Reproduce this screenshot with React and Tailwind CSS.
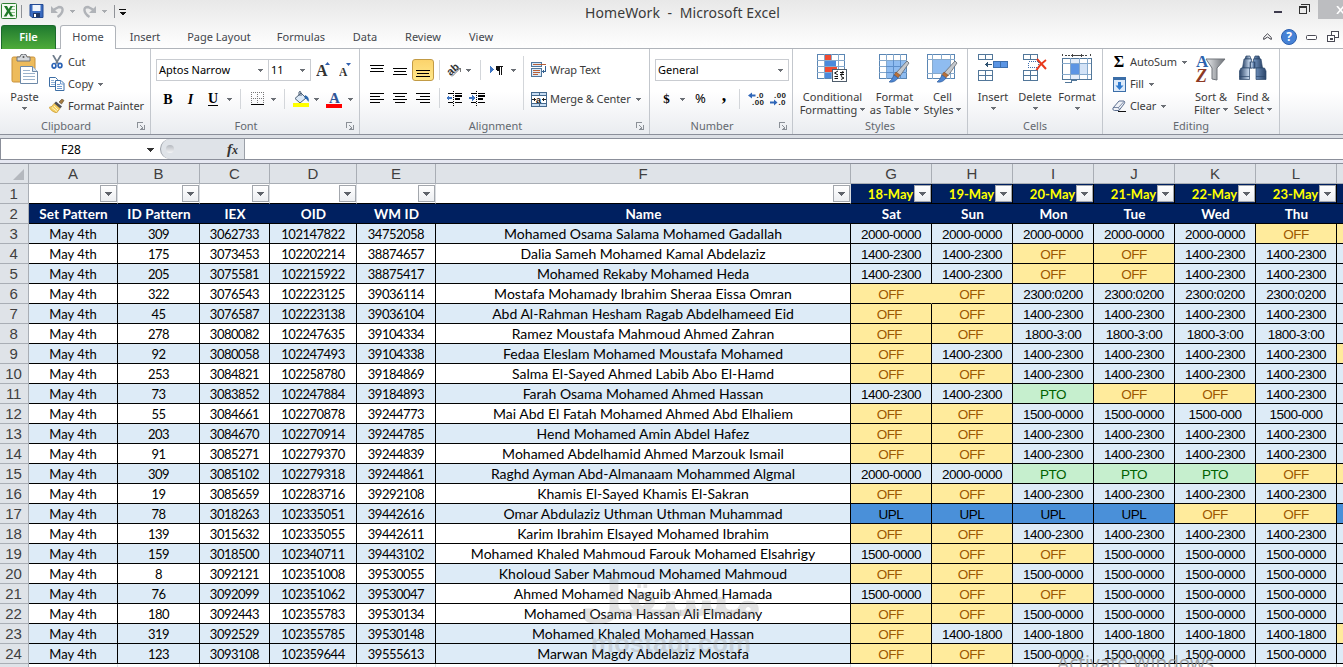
const COLS = [
  { id: "A", w: "w-[89px]", title: "Set Pattern" },
  { id: "B", w: "w-[82px]", title: "ID Pattern" },
  { id: "C", w: "w-[70px]", title: "IEX" },
  { id: "D", w: "w-[87px]", title: "OID" },
  { id: "E", w: "w-[79px]", title: "WM ID" },
  { id: "F", w: "w-[415px]", title: "Name" },
  { id: "G", w: "w-[81px]", title: "Sat", date: "18-May" },
  { id: "H", w: "w-[81px]", title: "Sun", date: "19-May" },
  { id: "I", w: "w-[81px]", title: "Mon", date: "20-May" },
  { id: "J", w: "w-[81px]", title: "Tue", date: "21-May" },
  { id: "K", w: "w-[81px]", title: "Wed", date: "22-May" },
  { id: "L", w: "w-[81px]", title: "Thu", date: "23-May" },
];

const a = "1400-2300";
const b = "1500-0000";
const c = "2000-0000";
const d = "2300:0200";
const e = "1800-3:00";
const f = "1400-1800";
const O = "OFF";
// typed with a trailing space in the sheet, so it sits a little to the left
const o = "OFF ";

// id pattern, iex, oid, wm id, name, days, left fill, name fill, next column
const ROWS = [
  ["309", "3062733", "102147822", "34752058", "Mohamed Osama Salama Mohamed Gadallah", [c, c, c, c, c, O], 1, 1, O],
  ["175", "3073453", "102202214", "38874657", "Dalia Sameh Mohamed Kamal Abdelaziz", [a, a, O, O, a, a], 0, 0],
  ["205", "3075581", "102215922", "38875417", "Mohamed Rekaby Mohamed Heda", [a, a, O, O, a, a], 1, 1],
  ["322", "3076543", "102223125", "39036114", "Mostafa Mohamady Ibrahim Sheraa Eissa Omran", [O, O, d, d, d, d], 0, 0],
  ["45", "3076587", "102223138", "39036104", "Abd Al-Rahman Hesham Ragab Abdelhameed Eid", [o, O, a, a, a, a], 1, 1],
  ["278", "3080082", "102247635", "39104334", "Ramez Moustafa Mahmoud Ahmed Zahran", [o, o, e, e, e, e], 0, 0],
  ["92", "3080058", "102247493", "39104338", "Fedaa Eleslam Mohamed Moustafa Mohamed", [O, a, a, a, a, a], 1, 1, O],
  ["253", "3084821", "102258780", "39184869", "Salma El-Sayed Ahmed Labib Abo El-Hamd", [O, O, a, a, a, a], 0, 0],
  ["73", "3083852", "102247884", "39184893", "Farah Osama Mohamed Ahmed Hassan", [a, a, "PTO", O, O, a], 1, 1],
  ["55", "3084661", "102270878", "39244773", "Mai Abd El Fatah Mohamed Ahmed Abd Elhaliem", [o, o, b, b, "1500-000", "1500-000"], 0, 0],
  ["203", "3084670", "102270914", "39244785", "Hend Mohamed Amin Abdel Hafez", [o, o, a, a, a, a], 1, 1],
  ["91", "3085271", "102279370", "39244839", "Mohamed Abdelhamid Ahmed Marzouk Ismail", [O, O, a, a, a, a], 0, 0],
  ["309", "3085102", "102279318", "39244861", "Raghd Ayman Abd-Almanaam Mohammed Algmal", [c, c, "PTO", "PTO", "PTO", O], 1, 1, O],
  ["19", "3085659", "102283716", "39292108", "Khamis El-Sayed Khamis El-Sakran", [o, O, a, a, a, a], 0, 0],
  ["78", "3018263", "102335051", "39442616", "Omar Abdulaziz Uthman Uthman Muhammad", ["UPL", "UPL", "UPL", "UPL", O, O], 1, 1, "UPL"],
  ["139", "3015632", "102335055", "39442611", "Karim Ibrahim Elsayed Mohamed Ibrahim", [o, o, a, a, a, a], 0, 0],
  ["159", "3018500", "102340711", "39443102", "Mohamed Khaled Mahmoud Farouk Mohamed Elsahrigy", [b, O, O, b, b, b], 1, 0],
  ["8", "3092121", "102351008", "39530055", "Kholoud Saber Mahmoud Mohamed Mahmoud", [o, o, b, b, b, b], 0, 1],
  ["76", "3092099", "102351062", "39530047", "Ahmed Mohamed Naguib Ahmed Hamada", [b, O, O, b, b, b], 1, 0],
  ["180", "3092443", "102355783", "39530134", "Mohamed Osama Hassan Ali Elmadany", [O, O, b, b, b, b], 0, 0],
  ["319", "3092529", "102355785", "39530148", "Mohamed Khaled Mohamed Hassan", [O, f, f, f, f, f], 1, 1, O],
  ["123", "3093108", "102359644", "39555613", "Marwan Magdy Abdelaziz Mostafa", [O, O, b, b, b, b], 1, 1],
];

const dayStyle = (value = "") => {
  if (value.startsWith("OFF")) return "bg-[#ffeb9c] text-[#9c5700]";
  if (value === "PTO") return "bg-[#c6efce] text-[#006100]";
  if (value === "UPL") return "bg-[#4a90d9] text-black";
  return "bg-[#ddebf7] text-black";
};

const Caret = ({ className = "text-[#6b6f75]" }) => (
  <svg width="5" height="3" viewBox="0 0 5 3" className={`shrink-0 ${className}`} shapeRendering="crispEdges">
    <path d="M0 0h5v1H4v1H3v1H2V2H1V1H0z" fill="currentColor" />
  </svg>
);

const Slot = ({ w, children }) => (
  <div className={`flex shrink-0 items-center justify-center ${w}`}>{children}</div>
);

const Sep = ({ w }) => (
  <Slot w={w}>
    <div className="h-[20px] w-px bg-[#d3d6da]" />
  </Slot>
);

const Launcher = () => (
  <svg width="8" height="8" viewBox="0 0 8 8" className="mr-[5px] shrink-0" shapeRendering="crispEdges">
    <path d="M.5 6V.5H6M3 3l3 3M7.5 3v4.500H3" fill="none" stroke="#8b9097" />
    <path d="M6 4v3H3z" fill="#8b9097" />
  </svg>
);

const Group = ({ w, label, launcher, children }) => (
  <section className={`flex h-[85px] shrink-0 flex-col border-r border-[#c3c7cd] ${w}`}>
    <div className="flex h-[69px]">{children}</div>
    <div className="flex h-[16px] items-center">
      <span className={`flex-1 text-center leading-4 text-[#63686f] ${launcher ? "pr-[5px]" : ""}`}>{label}</span>
      {launcher && <Launcher />}
    </div>
  </section>
);

const BigButton = ({ w, icon, lines, caretBelow }) => (
  <div className={`flex shrink-0 flex-col items-center pt-[5px] ${w}`}>
    <div className="flex h-[31px] items-start justify-center">{icon}</div>
    <span className="mt-[5px] whitespace-nowrap leading-[13px]">{lines[0]}</span>
    {lines[1] ? (
      <span className="flex items-center gap-[3px] whitespace-nowrap leading-[13px]">
        {lines[1]}
        <Caret />
      </span>
    ) : (
      caretBelow && <Caret className="mt-[4px] text-[#6b6f75]" />
    )}
  </div>
);

const SmallButton = ({ icon, label, caret }) => (
  <div className="flex h-[22px] items-center gap-[3px] whitespace-nowrap">
    <span className="flex w-[16px] justify-center">{icon}</span>
    <span className="leading-4 tracking-[-0.1px]">{label}</span>
    {caret && <Caret className="ml-[2px] text-[#6b6f75]" />}
  </div>
);

const PasteIcon = () => (
  <svg width="28" height="31" viewBox="0 0 28 31">
    <rect x="1" y="3" width="23" height="25" rx="1.500" fill="#edbb5c" stroke="#c8913a" />
    <path d="M6 7V3h3q0-3 3.500-3T16 3h3v4z" fill="#d7dade" stroke="#6f7378" />
    <circle cx="12.500" cy="3" r="1" fill="#555" />
    <path d="M9.500 12.500h12l5 5v12h-17z" fill="#fff" stroke="#6d89a8" />
    <path d="M21.500 12.500v5h5" fill="#dbe7f3" stroke="#6d89a8" />
    <path d="M12 16.500h7M12 19.500h12M12 22.500h12M12 25.500h12" stroke="#9bb2cb" />
  </svg>
);

const CutIcon = () => (
  <svg width="12" height="14" viewBox="0 0 12 14">
    <path d="M2 0l5 8.500M10 0L5 8.500" stroke="#6f7d8c" strokeWidth="1.700" fill="none" />
    <ellipse cx="3" cy="10.800" rx="1.900" ry="2.300" fill="none" stroke="#2b63b5" strokeWidth="1.700" />
    <ellipse cx="9" cy="10.500" rx="1.900" ry="2.200" fill="none" stroke="#2b63b5" strokeWidth="1.700" />
  </svg>
);

const CopyIcon = () => (
  <svg width="16" height="14" viewBox="0 0 16 14">
    <path d="M.5.500h6l2 2V9.500h-8z" fill="#fff" stroke="#3d6ea5" />
    <path d="M2 3.500h3M2 5.500h4M2 7.500h4" stroke="#8db0d8" />
    <path d="M6.500 3.500h5.500l3 3v7H6.500z" fill="#fff" stroke="#3d6ea5" />
    <path d="M11.500 3.500v3.500H15M8 7.500h3M8 9.500h5M8 11.500h5" stroke="#6f9bd0" fill="none" />
  </svg>
);

const PainterIcon = () => (
  <svg width="16" height="14" viewBox="0 0 16 14">
    <path d="M10 3l3-3 2 1.500L12.500 5z" fill="#a67c42" stroke="#5d4a2c" strokeWidth=".6" />
    <path d="M7 2.500l6 5-2 2-6-5z" fill="#4d4f56" />
    <path d="M5 4.500l6 5-3.500 4.500Q3 13 0 8.500 3.500 8 5 4.500z" fill="#f3cf63" stroke="#c9962d" strokeWidth=".7" />
    <path d="M3 8.500l5 4M5 7l4 4" stroke="#fff3c4" />
  </svg>
);

const GrowA = ({ small }) => (
  <svg width="14" height="16" viewBox="0 0 14 16">
    <text x="0" y="14" fontSize={small ? 11.500 : 16} fontWeight="bold" fontFamily="Liberation Serif, serif" fill="#333">A</text>
    <path d={small ? "M7 1h5l-2.500 3z" : "M9 3h5l-2.500-3z"} fill="#2f5fae" />
  </svg>
);

const BordersIcon = () => (
  <svg width="13" height="14" viewBox="0 0 13 14" shapeRendering="crispEdges">
    <path d="M.5 0v12M6.500 0v12M12.500 0v12M0 .5h13M0 6.500h13" stroke="#777" strokeDasharray="1 1" fill="none" />
    <path d="M0 12.500h13" stroke="#000" />
  </svg>
);

const FillIcon = () => (
  <svg width="17" height="16" viewBox="0 0 17 16">
    <path d="M2 7.500L8 2l5 5-6 5z" fill="#dce9f6" stroke="#4b5f76" />
    <path d="M6 5V1q1.500-2 2 1v3" fill="none" stroke="#4b5f76" />
    <path d="M12 4q5 2 3.500 7-1.500-3-4-4z" fill="#2b68ae" />
    <rect x="0" y="12" width="16" height="4" fill="#ff0" />
  </svg>
);

const FontColorIcon = () => (
  <svg width="17" height="17" viewBox="0 0 17 17">
    <text x="3" y="12" fontSize="15" fontWeight="bold" fontFamily="Liberation Serif, serif" fill="#2f5597">A</text>
    <rect x="0" y="13" width="16" height="4" fill="#f00" />
  </svg>
);

const Lines = ({ d }) => (
  <svg width="14" height="13" viewBox="0 0 14 13" shapeRendering="crispEdges">
    <path d={d} stroke="#000" />
  </svg>
);

const OrientationIcon = () => (
  <svg width="18" height="18" viewBox="0 0 18 18" className="overflow-visible">
    <text x="1" y="12" fontSize="11" fontWeight="bold" fontFamily="Liberation Sans, sans-serif" fill="#333" transform="rotate(-42 7 9)">ab</text>
    <path d="M6 15.500l8-8M14.500 7v4M14.500 7.500h-4" stroke="#777" fill="none" />
  </svg>
);

const DirectionIcon = () => (
  <svg width="14" height="11" viewBox="0 0 14 11" shapeRendering="crispEdges">
    <path d="M0 1v7l4-3.500z" fill="#3f76c4" />
    <path d="M6 1h7v1h-1v8h-1V2h-1v8H9V6H7L6 5V1z" fill="#111" />
  </svg>
);

const IndentIcon = ({ right }) => (
  <svg width="17" height="15" viewBox="0 0 17 15" shapeRendering="crispEdges">
    <path d="M2 2.500h5M9 2.500h7M9 4.500h7M9 5.500h7M9 8.500h5M9 7.500h5M2 11.500h5M9 11.500h7" stroke="#000" />
    <path d="M7.500 0v15" stroke="#000" strokeDasharray="1 1" />
    <path d={right ? "M0 6h3V4l3 3-3 3V8H0z" : "M6 6H3V4L0 7l3 3V8h3z"} fill="#3f76c4" />
  </svg>
);

const WrapIcon = () => (
  <svg width="17" height="16" viewBox="0 0 17 16" shapeRendering="crispEdges">
    <rect x=".5" y=".5" width="11" height="4" fill="#dbe9f7" stroke="#466f96" />
    <path d="M2 2.500h14" stroke="#b5562b" />
    <rect x=".5" y="6.500" width="11" height="8" fill="#dbe9f7" stroke="#466f96" />
    <path d="M2 8.500h8M2 10.500h8M2 12.500h5" stroke="#b5562b" />
    <path d="M15 4v5h-1V7l-2 2.500L14 12v-2h2V4z" fill="#32608f" />
  </svg>
);

const MergeIcon = () => (
  <svg width="16" height="15" viewBox="0 0 16 15" shapeRendering="crispEdges">
    <rect x=".5" y=".5" width="15" height="14" fill="#c6dcf2" stroke="#43688d" />
    <path d="M8 0v4M8 11v4M0 3.500h16M0 11.500h16" stroke="#43688d" />
    <rect x="1" y="4" width="14" height="7" fill="#fff" />
    <path d="M1 7.500h4M11 7.500h4M3.500 6v3M12.500 6v3" stroke="#222" />
    <text x="5" y="10.500" fontSize="9" fontWeight="bold" fontFamily="Liberation Sans, sans-serif" fill="#111">a</text>
  </svg>
);

const DecimalIcon = ({ less }) => (
  <svg width="17" height="14" viewBox="0 0 17 14">
    <g fontSize="8" fontWeight="bold" fontFamily="Liberation Sans, sans-serif" fill="#222">
      <text x={less ? 4 : 8.500} y="6" textLength={less ? 12 : 7}>{less ? ".00" : ".0"}</text>
      <text x={less ? 8.500 : 4} y="13" textLength={less ? 7 : 12}>{less ? ".0" : ".00"}</text>
    </g>
    <path d={less ? "M0 9.500h4V7.500l3.500 3L4 13.500v-2H0z" : "M7.500 2.500H4V.5L0 3.500l4 3v-2h3.500z"} fill="#2f66b8" />
  </svg>
);

const Grid = () => (
  <>
    <rect x=".5" y=".5" width="27" height="24" fill="#fff" stroke="#5a86b4" />
    <path d="M7.500 0v25M14.500 0v25M21.500 0v25M0 6.500h28M0 12.500h28M0 18.500h28" stroke="#86a9cc" />
  </>
);

const Brush = () => (
  <g>
    <path d="M28 7l2 2-9 13-4-3z" fill="#c4c8cd" stroke="#62676e" strokeWidth=".8" />
    <path d="M17 18l4 3-2 3-4-3z" fill="#b8703a" stroke="#7c4925" strokeWidth=".5" />
    <path d="M15 21l4 3q-3 5-9 4 3-2 5-7z" fill="#4e86d2" stroke="#2c5793" strokeWidth=".6" />
  </g>
);

const CondFormatIcon = () => (
  <svg width="31" height="29" viewBox="0 0 31 29">
    <g shapeRendering="crispEdges">
      <Grid />
      <rect x="8" y="1" width="6" height="5" fill="#ef4b32" />
      <rect x="8" y="7" width="11" height="5" fill="#4b8add" />
      <rect x="8" y="13" width="12" height="5" fill="#ef4b32" />
      <rect x="8" y="19" width="6" height="5" fill="#4b8add" />
      <rect x="15.500" y="15.500" width="14" height="12" fill="#fff" stroke="#4f5d6b" />
    </g>
    <path d="M21 17l-3.500 2 3.500 2M17.500 22.500H21M17.500 24.500H21M23 18.500h4M23 20.500h4M24 22.500l3 1.500-3 1.500M26 17l-2 5" stroke="#111" fill="none" />
  </svg>
);

const TableFormatIcon = () => (
  <svg width="31" height="29" viewBox="0 0 31 29">
    <g shapeRendering="crispEdges">
      <Grid />
      <rect x="8" y="7" width="19" height="17" fill="#8fbcf0" />
      <path d="M14.500 6v19M21.500 6v19M7 12.500h20M7 18.500h20" stroke="#5d8fcb" />
    </g>
    <Brush />
  </svg>
);

const CellStylesIcon = () => (
  <svg width="31" height="29" viewBox="0 0 31 29">
    <g shapeRendering="crispEdges">
      <rect x=".5" y=".5" width="27" height="24" fill="#fff" stroke="#5a86b4" />
      <path d="M5.500 0v25M23.500 0v25M14.500 0v5M0 5.500h28M0 19.500h28M14.500 20v5" stroke="#86a9cc" />
      <rect x="6" y="6" width="17" height="13" fill="#8fbcf0" />
    </g>
    <Brush />
  </svg>
);

const InsertIcon = () => (
  <svg width="31" height="28" viewBox="0 0 31 28" shapeRendering="crispEdges">
    <path d="M.5.500h14v5H.5zM7.500.500v5M.5 16.500h14v10H.5zM7.500 16v10M0 21.500h14" fill="#fff" stroke="#52779a" />
    <rect x="15.500" y="7.500" width="14" height="6" fill="#5b95e4" stroke="#3e6fae" />
    <path d="M22.500 8v5" stroke="#3e6fae" />
    <path d="M14 10.500H8M9.500 8v5M8.500 9v3M7.500 10v1" stroke="#2d5170" />
  </svg>
);

const DeleteIcon = () => (
  <svg width="25" height="28" viewBox="0 0 25 28">
    <g shapeRendering="crispEdges">
      <path d="M.5.500h14v5H.5zM7.500.500v5M.5 16.500h14v10H.5zM7.500 16v10M0 21.500h14" fill="#fff" stroke="#52779a" />
      <path d="M5.500 7.500h10v6h-10z" fill="none" stroke="#3e6fae" strokeDasharray="1 1" />
    </g>
    <path d="M14 5l9 10M23 6q-6 4-9.500 10" stroke="#e8391c" strokeWidth="2" fill="none" />
  </svg>
);

const FormatIcon = () => (
  <svg width="31" height="30" viewBox="0 0 31 30" shapeRendering="crispEdges">
    <path d="M.5 0v3M28.500 0v3M3 1.500h6M20 1.500h6" stroke="#444" strokeDasharray="2 1" />
    <path d="M9 1.500h11M10.500 0v3M19.500 0v3" stroke="#444" />
    <rect x=".5" y="4.500" width="29" height="21" fill="#fff" stroke="#52779a" />
    <rect x="9" y="5" width="8" height="20" fill="#e3edf9" />
    <path d="M8.500 4v21M17.500 4v21M25.500 4v21M0 9.500h29M0 20.500h29" stroke="#86a9cc" />
    <rect x="9" y="10" width="8" height="10" fill="#5b95e4" />
    <rect x="18" y="10" width="7" height="10" fill="#d3e3f7" />
    <path d="M3 28.500h6l1-2h5" fill="none" stroke="#52779a" />
  </svg>
);

const FillDownIcon = () => (
  <svg width="13" height="15" viewBox="0 0 13 15">
    <rect x=".5" y=".5" width="12" height="14" fill="#dceafa" stroke="#3b6ea8" />
    <path d="M1 2h11" stroke="#3b6ea8" strokeWidth="2" />
    <path d="M5 5h3v3.500h2.500L6.500 13l-4-4.500H5z" fill="#2f7bd0" />
  </svg>
);

const ClearIcon = () => (
  <svg width="14" height="12" viewBox="0 0 14 12">
    <path d="M1 8l6-7h5q1.500 1 0 3L7 10.500H2.500Q0 10 1 8z" fill="#eef1f6" stroke="#5c6f90" />
    <path d="M1.500 7.500h5l1 2.500M6.500 7.500L12 1.500" stroke="#5c6f90" fill="none" strokeWidth=".8" />
    <path d="M6 11.500h8" stroke="#111" />
  </svg>
);

const SortIcon = () => (
  <svg width="30" height="31" viewBox="0 0 30 31" className="overflow-visible">
    <defs>
      <linearGradient id="funnel" x1="0" x2="1">
        <stop offset="0" stopColor="#e9ebed" />
        <stop offset="1" stopColor="#6b6f75" />
      </linearGradient>
    </defs>
    <path d="M10 5h19l-8 9v12l-5-1V14z" fill="url(#funnel)" stroke="#70757b" />
    <text x="0" y="13" fontSize="17" fontWeight="bold" fontFamily="Liberation Serif, serif" fill="#2b62ad">A</text>
    <text x="0" y="28" fontSize="18" fontWeight="bold" fontStyle="italic" fontFamily="Liberation Serif, serif" fill="#8d3a25">Z</text>
  </svg>
);

const FindIcon = () => (
  <svg width="28" height="29" viewBox="0 0 28 29">
    <defs>
      <linearGradient id="barrel" x1="0" x2="1">
        <stop offset="0" stopColor="#2b4468" />
        <stop offset=".35" stopColor="#c4d6ec" />
        <stop offset=".6" stopColor="#6f90bb" />
        <stop offset="1" stopColor="#2b4468" />
      </linearGradient>
    </defs>
    <g fill="url(#barrel)" stroke="#2d476c" strokeWidth=".7">
      <path d="M7 2h4l1 3H6zM16 2h4l1 3h-6z" />
      <path d="M5 5h7.500l.5 9H3.500zM14.500 5H22l1.500 9H14z" />
      <rect x="11" y="8" width="5" height="6" />
      <path d="M2 14h8.500v11.500H.5V17zM17 14h8.500l1.500 3v8.500H17z" />
    </g>
    <path d="M.5 22.500h10M17 22.500h10" stroke="#2d476c" strokeWidth=".7" />
  </svg>
);

const ExcelIcon = () => (
  <svg width="17" height="17" viewBox="0 0 17 17">
    <rect x=".5" y=".5" width="15" height="15" rx="1" fill="#f4faf2" stroke="#2e7d32" />
    <path d="M10 3.500h4M10 6.500h4M10 9.500h4M10 12.500h4" stroke="#8cbf8c" />
    <path d="M3 3h3l1.700 3L9.500 3H12L9 8l3.500 5.500h-3L7.500 10l-2 3.500H2.700L6 8z" fill="#1f7a28" />
  </svg>
);

const SaveIcon = () => (
  <svg width="15" height="14" viewBox="0 0 15 14">
    <path d="M1 .5h13v13H3l-2-2z" fill="#3a6bc0" stroke="#234a93" />
    <rect x="3.500" y="1" width="8" height="6" fill="#f0f5fc" />
    <rect x="4" y="9" width="7" height="4.500" fill="#1d3768" />
    <rect x="5" y="10" width="2" height="3" fill="#fff" />
  </svg>
);

const UndoIcon = ({ flip }) => (
  <svg width="13" height="13" viewBox="0 0 13 13" className={flip ? "-scale-x-100" : ""}>
    <path d="M3 4.500l5-2.500q4 0 3.500 3.500T6.500 12" fill="none" stroke="#b0b3b8" strokeWidth="2.400" />
    <path d="M0 1v7h7z" fill="#b0b3b8" />
  </svg>
);

const TitleBar = () => (
  <header className="flex h-[25px] items-start">
    <div className="flex h-[22px] w-[300px] items-center pl-px">
      <ExcelIcon />
      <div className="ml-[3px] h-[13px] w-px bg-[#8f9297]" />
      <div className="ml-[7px]"><SaveIcon /></div>
      <div className="ml-[7px]"><UndoIcon /></div>
      <Caret className="ml-[6px] text-[#a9acb0]" />
      <div className="ml-[8px]"><UndoIcon flip /></div>
      <Caret className="ml-[6px] text-[#a9acb0]" />
      <div className="ml-[7px] h-[13px] w-px bg-[#8f9297]" />
      <svg width="7" height="7" viewBox="0 0 7 7" className="ml-[4px] mt-[3px]" shapeRendering="crispEdges">
        <path d="M0 .5h7" stroke="#111" />
        <path d="M0 3h7L3.500 6.500z" fill="#111" />
      </svg>
    </div>
    <h1 className="flex-1 whitespace-pre pl-[22px] text-center text-[14px] leading-[26px] tracking-[0.1px] text-[#3a3a3a]">
      HomeWork{"  -  "}Microsoft Excel
    </h1>
    <div className="flex w-[300px] justify-end">
      <svg width="40" height="19" viewBox="0 0 40 19" shapeRendering="crispEdges" className="mr-[5px]">
        <path d="M1 11h8v2H1z" fill="#3d3a4c" />
        <path d="M26.500 6.500h7v7h-7zM28 4.500h8.500V12" fill="none" stroke="#333" />
        <path d="M26 6h8v2h-8z" fill="#333" />
      </svg>
      <div className="flex h-[19px] w-[25px] items-center bg-[#bcbdc0] pl-[18px]">
        <svg width="7" height="8" viewBox="0 0 7 8">
          <path d="M1 0l7 8M8 0L1 8" stroke="#fff" strokeWidth="1.600" />
        </svg>
      </div>
    </div>
  </header>
);

const TABS = [
  ["Insert", "w-[58px]"],
  ["Page Layout", "w-[90px]"],
  ["Formulas", "w-[74px]"],
  ["Data", "w-[54px]"],
  ["Review", "w-[62px]"],
  ["View", "w-[54px]"],
];

const TabBar = () => (
  <nav className="flex h-[24px] text-[#44474d]">
    <div className="ml-px flex w-[55px] items-center justify-center rounded-t-[3px] border border-b-0 border-[#1b6a2b] bg-linear-to-b from-[#1f7a2f] to-[#4dab3a] font-semibold text-white">
      File
    </div>
    <div className="w-[4px] border-b border-[#b0b4ba]" />
    <div className="flex w-[56px] items-center justify-center rounded-t-[3px] border border-b-0 border-[#b0b4ba] bg-white">Home</div>
    {TABS.map(([label, w]) => (
      <div key={label} className={`flex items-center justify-center border-b border-[#b0b4ba] pt-px ${w}`}>{label}</div>
    ))}
    <div className="flex flex-1 items-center justify-end border-b border-[#b0b4ba] pr-[3px]">
      <svg width="9" height="7" viewBox="0 0 9 7">
        <path d="M.7 4.500L4.500.8l3.800 3.700v2L4.500 4 .7 6.500z" fill="#fff" stroke="#3d3d46" />
      </svg>
      <div className="ml-[9px] flex h-[16px] w-[16px] items-center justify-center rounded-full border border-[#2b5fae] bg-[#4682d6] text-[12px] font-bold text-white">?</div>
      <svg width="12" height="6" viewBox="0 0 12 6" className="ml-[9px] mt-[2px]">
        <rect x=".5" y=".5" width="10" height="4" rx="1" fill="#fff" stroke="#4a4a55" />
      </svg>
      <svg width="13" height="12" viewBox="0 0 13 12" className="ml-[9px]" shapeRendering="crispEdges">
        <rect x="4.500" y=".5" width="7" height="6" fill="#fff" stroke="#4a4a55" />
        <rect x=".5" y="4.500" width="7" height="6" fill="#fff" stroke="#4a4a55" />
        <rect x="3" y="7" width="3" height="2" fill="#4a4a55" />
      </svg>
    </div>
  </nav>
);

const Select = ({ w, value }) => (
  <div className={`flex h-[22px] items-center justify-between border border-[#c9ccd1] bg-white pl-[2px] pr-[5px] text-black ${w}`}>
    <span className="leading-4">{value}</span>
    <Caret />
  </div>
);

const Ribbon = () => (
  <div className="flex h-[85px] bg-linear-to-b from-white from-50% to-[#eaecf0] text-[#3b3b3b]">
    <Group w="w-[151px]" label="Clipboard" launcher>
      <BigButton w="w-[49px]" icon={<PasteIcon />} lines={["Paste"]} caretBelow />
      <div className="flex flex-col pt-[2px]">
        <SmallButton icon={<CutIcon />} label="Cut" />
        <SmallButton icon={<CopyIcon />} label="Copy" caret />
        <SmallButton icon={<PainterIcon />} label="Format Painter" />
      </div>
    </Group>

    <Group w="w-[209px]" label="Font" launcher>
      <div className="flex flex-col pl-[5px] pt-[10px]">
        <div className="flex h-[22px] items-center">
          <Select w="w-[113px]" value="Aptos Narrow" />
          <Select w="-ml-px w-[43px]" value="11" />
          <Slot w="ml-[4px] w-[16px]"><GrowA /></Slot>
          <Slot w="ml-[8px] w-[14px]"><GrowA small /></Slot>
        </div>
        <div className="mt-[6px] flex h-[24px] items-center font-['Liberation_Serif',serif] text-[14px] text-black">
          <Slot w="w-[24px]"><b>B</b></Slot>
          <Slot w="w-[21px]"><i className="font-semibold">I</i></Slot>
          <Slot w="w-[24px]"><b className="border-b border-black leading-[13px]">U</b></Slot>
          <Slot w="w-[8px]"><Caret /></Slot>
          <Sep w="w-[14px]" />
          <Slot w="w-[21px]"><BordersIcon /></Slot>
          <Slot w="w-[10px]"><Caret /></Slot>
          <Sep w="w-[12px]" />
          <Slot w="w-[22px]"><FillIcon /></Slot>
          <Slot w="w-[8px]"><Caret /></Slot>
          <Slot w="w-[28px]"><FontColorIcon /></Slot>
          <Slot w="w-[4px]"><Caret /></Slot>
        </div>
      </div>
    </Group>

    <Group w="w-[290px]" label="Alignment" launcher>
      <div className="flex w-[163px] flex-col pl-[5px] pt-[10px]">
        <div className="flex h-[22px] items-center">
          <Slot w="w-[24px]"><Lines d="M0 1.500h14M1 4.500h12M0 7.500h14" /></Slot>
          <Slot w="w-[22px]"><Lines d="M0 4.500h14M1 7.500h12M0 10.500h14" /></Slot>
          <Slot w="w-[24px]">
            <div className="flex h-[22px] w-[22px] items-center justify-center rounded-[3px] border border-[#c29b45] bg-linear-to-b from-[#fbd36c] to-[#ffe88a]">
              <Lines d="M0 6.500h14M1 9.500h12M0 12.500h14" />
            </div>
          </Slot>
          <Sep w="w-[8px]" />
          <Slot w="w-[23px]"><OrientationIcon /></Slot>
          <Slot w="w-[5px]"><Caret /></Slot>
          <Sep w="w-[18px]" />
          <Slot w="w-[16px]"><DirectionIcon /></Slot>
          <Slot w="w-[16px]"><Caret /></Slot>
        </div>
        <div className="mt-[6px] flex h-[22px] items-center">
          <Slot w="w-[24px]"><Lines d="M0 1.500h14M0 4.500h10M0 7.500h14M0 10.500h10" /></Slot>
          <Slot w="w-[22px]"><Lines d="M0 1.500h14M2 4.500h10M0 7.500h14M2 10.500h10" /></Slot>
          <Slot w="w-[24px]"><Lines d="M0 1.500h14M4 4.500h10M0 7.500h14M4 10.500h10" /></Slot>
          <Sep w="w-[8px]" />
          <Slot w="w-[23px]"><IndentIcon /></Slot>
          <Slot w="w-[23px]"><IndentIcon right /></Slot>
        </div>
      </div>
      <div className="mt-[7px] h-[54px] w-px bg-[#d3d6da]" />
      <div className="flex flex-col pl-[7px] pt-[10px]">
        <SmallButton icon={<WrapIcon />} label="Wrap Text" />
        <div className="h-[7px]" />
        <SmallButton icon={<MergeIcon />} label="Merge & Center" caret />
      </div>
    </Group>

    <Group w="w-[143px]" label="Number" launcher>
      <div className="flex flex-col pl-[5px] pt-[10px]">
        <Select w="w-[134px]" value="General" />
        <div className="mt-[7px] flex h-[22px] items-center text-black">
          <Slot w="w-[23px]"><b className="font-['Liberation_Serif',serif] text-[13px]">$</b></Slot>
          <Slot w="w-[8px]"><Caret /></Slot>
          <Slot w="w-[29px]"><span className="text-[13px]">%</span></Slot>
          <Slot w="w-[18px]"><b className="-mt-[8px] font-['Liberation_Serif',serif] text-[18px]">,</b></Slot>
          <Sep w="w-[12px]" />
          <Slot w="w-[22px]"><DecimalIcon /></Slot>
          <Slot w="w-[22px]"><DecimalIcon less /></Slot>
        </div>
      </div>
    </Group>

    <Group w="w-[175px]" label="Styles">
      <div className="flex pl-[4px]">
        <BigButton w="w-[71px]" icon={<CondFormatIcon />} lines={["Conditional", "Formatting"]} />
        <BigButton w="w-[53px]" icon={<TableFormatIcon />} lines={["Format", "as Table"]} />
        <BigButton w="w-[43px]" icon={<CellStylesIcon />} lines={["Cell", "Styles"]} />
      </div>
    </Group>

    <Group w="w-[135px]" label="Cells">
      <div className="flex pl-[4px]">
        <BigButton w="w-[42px]" icon={<InsertIcon />} lines={["Insert"]} caretBelow />
        <BigButton w="w-[42px]" icon={<DeleteIcon />} lines={["Delete"]} caretBelow />
        <BigButton w="w-[42px]" icon={<FormatIcon />} lines={["Format"]} caretBelow />
      </div>
    </Group>

    <Group w="w-[177px]" label="Editing">
      <div className="flex w-[87px] flex-col pl-[8px] pt-[2px]">
        <SmallButton icon={<b className="font-['Liberation_Serif',serif] text-[16px] leading-4 text-black">Σ</b>} label="AutoSum" caret />
        <SmallButton icon={<FillDownIcon />} label="Fill" caret />
        <SmallButton icon={<ClearIcon />} label="Clear" caret />
      </div>
      <BigButton w="w-[42px]" icon={<SortIcon />} lines={["Sort &", "Filter"]} />
      <BigButton w="w-[42px]" icon={<FindIcon />} lines={["Find &", "Select"]} />
    </Group>
  </div>
);

const FormulaBar = () => (
  <div className="flex h-[21px] border-b border-[#8b8f9a] bg-white">
    <div className="flex w-[160px] items-center border-l border-[#8b8f9a]">
      <span className="w-[140px] pt-px text-center text-[12px] leading-4 text-black">F28</span>
      <svg width="7" height="4" viewBox="0 0 7 4" className="ml-[6px] mt-[2px]" shapeRendering="crispEdges">
        <path d="M0 0h7L3.500 4z" fill="#333" />
      </svg>
    </div>
    <div className="flex w-[85px] items-center rounded-l-full border-l border-r border-[#9ba0a8] bg-[#dfe3e8]">
      <div className="ml-[5px] h-[8px] w-[8px] rounded-full bg-linear-to-b from-[#b5b9bf] to-[#f4f5f7]" />
      <i className="ml-auto mr-[6px] font-['Liberation_Serif',serif] text-[15px] font-bold leading-4 text-[#333]">
        f<span className="text-[12px]">x</span>
      </i>
    </div>
  </div>
);

const FilterButton = () => (
  <div className="absolute right-0 top-px flex h-[17px] w-[17px] items-center justify-center border border-[#a3a7ad] bg-linear-to-b from-white to-[#eceef1]">
    <svg width="7" height="4" viewBox="0 0 7 4" shapeRendering="crispEdges">
      <path d="M0 0h7L3.500 4z" fill="#5f636a" />
    </svg>
  </div>
);

const RowHead = ({ n }) => (
  <div className="flex w-[29px] shrink-0 items-center justify-center border-b border-r border-[#a9aeb5] bg-[#dfe3e8] pr-px pt-[2px] font-['Liberation_Sans',sans-serif] text-[15px] font-normal tracking-[-0.2px] text-[#3f3f3f]">
    {n}
  </div>
);

const Sheet = () => (
  <main className="flex w-[1343px] flex-col overflow-hidden bg-white">
    <div className="flex h-[20px] font-['Liberation_Sans',sans-serif] text-[15px] text-[#3f3f3f]">
      <div className="flex w-[29px] shrink-0 items-end justify-end border-b border-r border-[#a9aeb5] bg-[#dfe3e8] pb-[3px] pr-[4px]">
        <svg width="11" height="11" viewBox="0 0 11 11">
          <path d="M11 0v11H0z" fill="#b4b8be" />
        </svg>
      </div>
      {COLS.map((col) => (
        <div key={col.id} className={`flex shrink-0 items-center justify-center border-b border-r border-[#a9aeb5] bg-[#dfe3e8] pt-[2px] ${col.w}`}>
          {col.id}
        </div>
      ))}
      <div className="flex-1 border-b border-[#a9aeb5] bg-[#dfe3e8]" />
    </div>

    <div className="flex h-[20px]">
      <RowHead n={1} />
      {COLS.map((col) => (
        <div
          key={col.id}
          className={`relative flex shrink-0 items-center justify-center border-b border-r border-b-black ${col.w} ${col.date ? "border-r-black bg-[#002060]" : "border-r-[#d9dce0]"}`}
        >
          <span className="pr-px font-['Lato',sans-serif] text-[13px] font-bold leading-4 text-[#ff0]">{col.date}</span>
          <FilterButton />
        </div>
      ))}
      <div className="flex-1 border-b border-black bg-[#002060]" />
    </div>

    <div className="flex h-[20px] font-['Lato',sans-serif] text-[13.5px] font-bold text-white">
      <RowHead n={2} />
      {COLS.map((col) => (
        <div key={col.id} className={`flex shrink-0 items-center justify-center border-b border-black bg-[#002060] pt-[2px] tracking-[0.1px] ${col.w}`}>
          {col.title}
        </div>
      ))}
      <div className="flex-1 border-b border-black bg-[#002060]" />
    </div>

    {ROWS.map(([id, iex, oid, wm, name, days, left, mid, next], idx) => (
      <div key={idx} className="flex h-[20px] text-black">
        <RowHead n={idx + 3} />
        {["May 4th", id, iex, oid, wm, name].map((value, i) => (
          <div
            key={i}
            className={`flex shrink-0 items-center justify-center whitespace-nowrap border-b border-r border-black font-['Lato',sans-serif] ${COLS[i].w} ${(i === 5 ? mid : left) ? "bg-[#ddebf7]" : "bg-white"} ${i === 5 ? "text-[14px]" : "pt-[2px] text-[13px]"} ${i > 0 && i < 5 ? "tracking-[-0.5px]" : ""}`}
          >
            {value}
          </div>
        ))}
        {days.map((value, i) => (
          <div
            key={i}
            className={`flex shrink-0 items-center justify-center whitespace-pre border-b border-r border-b-black pt-[3px] font-['Liberation_Sans',sans-serif] text-[13.5px] leading-4 tracking-[-0.5px] ${COLS[i + 6].w} ${dayStyle(value)} ${idx === 3 && i === 0 ? "border-r-[#ffeb9c]" : "border-r-black"}`}
          >
            {value}
          </div>
        ))}
        <div className={`flex-1 border-b border-black ${dayStyle(next)}`} />
      </div>
    ))}

    <div className="flex h-[20px]">
      <RowHead n="" />
      {COLS.map((col) => (
        <div key={col.id} className={`shrink-0 border-r border-[#d9dce0] ${col.w}`} />
      ))}
    </div>
  </main>
);

export default function App() {
  return (
    <div className="relative h-[667px] w-[1343px] overflow-hidden bg-[#e3e5ea] font-['Noto_Sans',sans-serif] text-[11px]">
      <div className="bg-linear-to-b from-[#e8e8e8] to-white">
        <TitleBar />
        <TabBar />
      </div>
      <Ribbon />
      <div className="h-[5px] border-b border-t border-[#8b8f9a] bg-[#dcdfe5]" />
      <FormulaBar />
      <div className="h-[4px] border-b border-[#8b8f9a] bg-[#e6e8f2]" />
      <Sheet />

      <div className="pointer-events-none absolute left-[590px] top-[568px] flex w-[162px] flex-col items-center font-['DejaVu_Sans',sans-serif] font-bold text-[#8a8a8a]/25">
        <span dir="rtl" className="text-[50px] leading-[62px]">مستقل</span>
        <span className="font-['Liberation_Sans',sans-serif] text-[26px] leading-[26px]">mostaql.com</span>
      </div>
      <div className="pointer-events-none absolute left-[1057px] top-[650px] whitespace-nowrap text-[19px] leading-[26px] text-[#8c8c8c]/80">
        Activate Windows
      </div>
    </div>
  );
}
